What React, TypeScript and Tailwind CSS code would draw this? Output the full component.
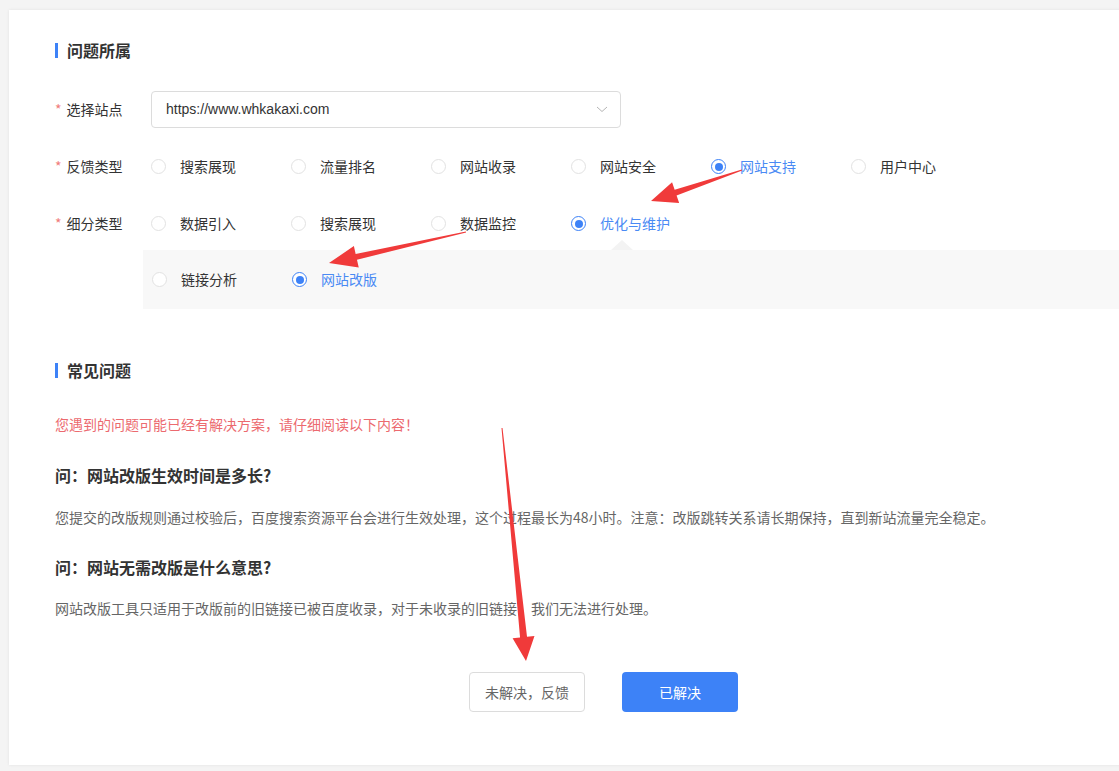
import React from 'react';

const font = { fontFamily: '"Microsoft YaHei", "Noto Sans CJK SC", "Noto Sans", sans-serif' };

const feedbackTypes = ['搜索展现', '流量排名', '网站收录', '网站安全', '网站支持', '用户中心'];
const subTypes = ['数据引入', '搜索展现', '数据监控', '优化与维护'];
const detailTypes = ['链接分析', '网站改版'];

const Radio: React.FC<{ label: string; checked?: boolean }> = ({ label, checked }) => (
  <div className="flex items-center w-[140px] shrink-0">
    <span
      className={`w-[15px] h-[15px] rounded-full border flex items-center justify-center bg-white ${
        checked ? 'border-[#3d82f7]' : 'border-[#e2e2e2]'
      }`}
    >
      {checked && <span className="w-[8px] h-[8px] rounded-full bg-[#3d82f7]" />}
    </span>
    <span className={`ml-[14px] text-[14px] ${checked ? 'text-[#4a8af4]' : 'text-[#333]'}`}>{label}</span>
  </div>
);

const FieldLabel: React.FC<{ text: string }> = ({ text }) => (
  <div className="w-[96px] shrink-0 flex items-center text-[14px] text-[#333]">
    <span className="text-[#f07c7c] mr-[5px]">*</span>
    {text}
  </div>
);

const SectionTitle: React.FC<{ text: string }> = ({ text }) => (
  <div className="flex items-center h-[20px]">
    <span className="w-[3px] h-[15px] bg-[#3d82f7] mr-[9px]" />
    <span className="text-[16px] font-bold text-[#333]">{text}</span>
  </div>
);

type Pt = [number, number];

// tapered red arrow drawn from tail to tip
function arrowPoints(t: Pt, p: Pt, headLen = 26, headW = 22, shaft = 7) {
  const dx = p[0] - t[0];
  const dy = p[1] - t[1];
  const len = Math.hypot(dx, dy);
  const ux = dx / len;
  const uy = dy / len;
  const nx = -uy;
  const ny = ux;
  const b: Pt = [p[0] - ux * headLen, p[1] - uy * headLen];
  const pts: Pt[] = [
    [t[0] + nx * 0.5, t[1] + ny * 0.5],
    [b[0] + (nx * shaft) / 2, b[1] + (ny * shaft) / 2],
    [b[0] + (nx * headW) / 2, b[1] + (ny * headW) / 2],
    p,
    [b[0] - (nx * headW) / 2, b[1] - (ny * headW) / 2],
    [b[0] - (nx * shaft) / 2, b[1] - (ny * shaft) / 2],
    [t[0] - nx * 0.5, t[1] - ny * 0.5],
  ];
  return pts.map((q) => q.join(',')).join(' ');
}

const Arrows: React.FC = () => (
  <svg className="absolute left-0 top-0 pointer-events-none" width="1119" height="771">
    <polygon points={arrowPoints([742, 170], [651, 201], 26, 22, 6)} fill="#f03a3a" />
    <polygon points={arrowPoints([466, 232], [329, 263], 28, 22, 6)} fill="#f03a3a" />
    <polygon points={arrowPoints([502, 428], [526, 661], 24, 22, 7)} fill="#f03a3a" />
  </svg>
);

export default function App() {
  return (
    <div className="relative w-[1119px] h-[771px] bg-[#f4f4f4] overflow-hidden pt-[10px] pl-[9px]" style={font}>
      <div className="bg-white h-[755px] w-[1130px] shadow-[0_0_3px_rgba(0,0,0,0.08)] pt-[30px]">
        <div className="pl-[46px]">
          <SectionTitle text="问题所属" />

          <div className="flex items-center h-[37px] mt-[31px]">
            <FieldLabel text="选择站点" />
            <div className="w-[470px] h-[37px] border border-[#dcdcdc] rounded-[4px] flex items-center justify-between pl-[14px] pr-[12px]">
              <span className="text-[14px] text-[#333]" style={{ fontFamily: '"Liberation Sans", Arial, sans-serif' }}>
                https://www.whkakaxi.com
              </span>
              <svg width="12" height="7" viewBox="0 0 12 7">
                <path d="M1 1l5 4.5L11 1" fill="none" stroke="#b5b5b5" strokeWidth="1" />
              </svg>
            </div>
          </div>

          <div className="flex items-center h-[37px] mt-[20px]">
            <FieldLabel text="反馈类型" />
            {feedbackTypes.map((t) => (
              <Radio key={t} label={t} checked={t === '网站支持'} />
            ))}
          </div>

          <div className="flex items-center h-[37px] mt-[20px]">
            <FieldLabel text="细分类型" />
            {subTypes.map((t) => (
              <Radio key={t} label={t} checked={t === '优化与维护'} />
            ))}
          </div>
        </div>

        <div className="relative ml-[134px] mt-[8px] h-[59px] bg-[#f8f8f8] flex items-center pl-[9px]">
          <span className="absolute left-[468px] -top-[10px] w-0 h-0 border-l-[11px] border-r-[11px] border-b-[10px] border-l-transparent border-r-transparent border-b-[#f3f3f3]" />
          {detailTypes.map((t) => (
            <Radio key={t} label={t} checked={t === '网站改版'} />
          ))}
        </div>

        <div className="pl-[46px] mt-[51px]">
          <SectionTitle text="常见问题" />
          <p className="mt-[34px] text-[14px] leading-[20px] text-[#ec6a6f]">
            您遇到的问题可能已经有解决方案，请仔细阅读以下内容！
          </p>
          <h3 className="mt-[29px] text-[16px] leading-[24px] font-bold text-[#333]">问：网站改版生效时间是多长?</h3>
          <p className="mt-[20px] text-[14px] leading-[20px] text-[#666]">
            您提交的改版规则通过校验后，百度搜索资源平台会进行生效处理，这个过程最长为48小时。注意：改版跳转关系请长期保持，直到新站流量完全稳定。
          </p>
          <h3 className="mt-[28px] text-[16px] leading-[24px] font-bold text-[#333]">问：网站无需改版是什么意思?</h3>
          <p className="mt-[19px] text-[14px] leading-[20px] text-[#666]">
            网站改版工具只适用于改版前的旧链接已被百度收录，对于未收录的旧链接，我们无法进行处理。
          </p>

          <div className="flex mt-[54px] ml-[414px] gap-[37px]">
            <button className="w-[116px] h-[40px] border border-[#dcdcdc] rounded-[4px] bg-white text-[14px] text-[#666]">
              未解决，反馈
            </button>
            <button className="w-[116px] h-[40px] rounded-[4px] bg-[#3d82f7] text-[14px] text-white">已解决</button>
          </div>
        </div>
      </div>
      <Arrows />
    </div>
  );
}
